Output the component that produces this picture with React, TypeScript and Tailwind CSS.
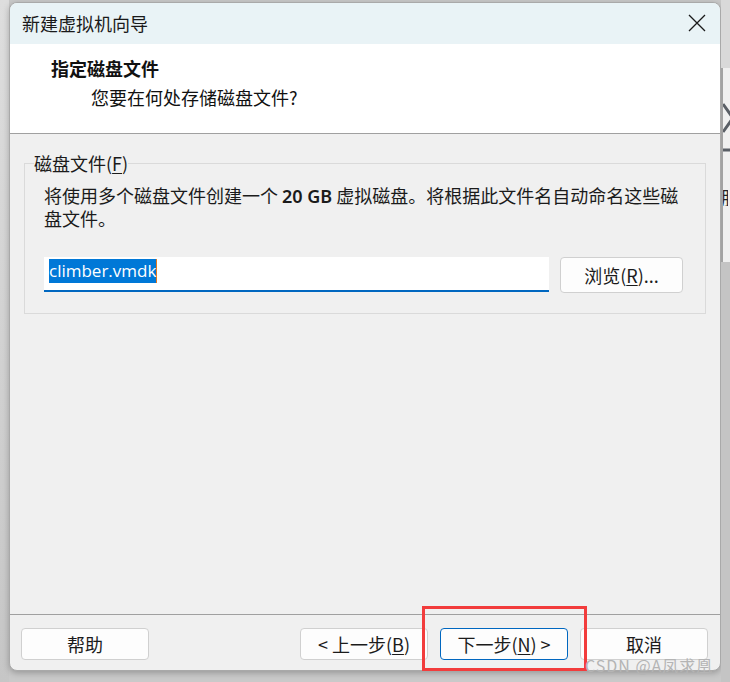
import React from "react"

const cjk = "font-['Noto_Sans_CJK_SC','Noto_Sans',sans-serif]"

function Btn({ children, primary }: { children: React.ReactNode; primary?: boolean }) {
  return (
    <div
      className={`flex h-[32px] w-[128px] items-center justify-center rounded-[4px] bg-[#fdfdfd] text-[18px] leading-none text-[#1b1b1b] border ${
        primary ? "border-[#0067c0]" : "border-[#d0d0d0]"
      }`}
    >
      {children}
    </div>
  )
}

export default function App() {
  return (
    <div className={`relative flex h-[682px] w-[730px] overflow-hidden bg-[#c9c9c9] ${cjk}`}>
      {/* left desktop strip */}
      <div className="w-[9px] shrink-0 bg-gradient-to-b from-[#dedede] to-[#c6c6c6]" />

      {/* wizard window */}
      <div className="mt-[2px] flex h-[669px] w-[712px] shrink-0 flex-col overflow-hidden rounded-[8px] border border-[#a9a9a9] bg-[#f0f0f0] shadow-[0_2px_6px_rgba(0,0,0,0.25)]">
        {/* title bar */}
        <div className="flex h-[41px] shrink-0 items-center justify-between bg-[#e9f3f6] pb-[2px] pl-[12px] pr-[14px]">
          <span className="text-[18px] leading-none text-[#1a1a1a]">新建虚拟机向导</span>
          <svg width="18" height="18" viewBox="0 0 18 18">
            <path d="M1 1 L17 17 M17 1 L1 17" stroke="#1a1a1a" strokeWidth="1.3" fill="none" />
          </svg>
        </div>

        {/* header */}
        <div className="flex h-[90px] shrink-0 flex-col border-b border-[#a0a0a0] bg-white pl-[41px] pt-[13px]">
          <div className="text-[18px] font-bold leading-[22px] text-[#111]">指定磁盘文件</div>
          <div className="ml-[40px] mt-[7px] text-[18px] leading-[22px] text-[#111]">您要在何处存储磁盘文件?</div>
        </div>

        {/* body */}
        <div className="flex-1 pl-[14px] pr-[14px] pt-[18px]">
          <fieldset className="m-0 min-w-0 border border-[#dadada] pb-[20px] pl-[19px] pr-[19px] pt-[10px]">
            <legend className="-ml-[10px] text-[18px] leading-[22px] text-[#1b1b1b]">
              磁盘文件(<span className="underline underline-offset-2">F</span>)
            </legend>
            <p className="w-[640px] text-[18px] leading-[22px] text-[#1b1b1b]">
              将使用多个磁盘文件创建一个 <b className="font-['Noto_Sans',sans-serif] font-semibold">20 GB</b> 虚拟磁盘。将根据此文件名自动命名这些磁盘文件。
            </p>
            <div className="mt-[28px] flex items-start gap-[11px]">
              <div className="flex h-[35px] w-[505px] items-start border-b-2 border-[#0067c0] bg-white pl-[5px] pt-[2px]">
                <span className="border-r border-[#e2781f] bg-[#0078d7] font-['Open_Sans','Noto_Sans',sans-serif] text-[17px] leading-[24px] text-white">
                  climber.vmdk
                </span>
              </div>
              <div className="flex h-[36px] w-[123px] items-center justify-center rounded-[4px] border border-[#d0d0d0] bg-[#fdfdfd] text-[18px] leading-none text-[#1b1b1b]">
                浏览(<span className="underline underline-offset-2">R</span>)...
              </div>
            </div>
          </fieldset>
        </div>

        {/* footer */}
        <div className="flex h-[56px] shrink-0 items-start justify-between border-t border-[#a0a0a0] pl-[11px] pr-[12px] pt-[13px]">
          <Btn>帮助</Btn>
          <div className="flex gap-[12px]">
            <Btn>
              &lt;&nbsp;上一步(<span className="underline underline-offset-2">B</span>)
            </Btn>
            <Btn primary>
              下一步(<span className="underline underline-offset-2">N</span>)&nbsp;&gt;
            </Btn>
            <Btn>取消</Btn>
          </div>
        </div>
      </div>

      {/* right strip: part of another window */}
      <div className="flex w-[9px] shrink-0 flex-col">
        <div className="h-[68px] bg-[#d9d9d9]" />
        <div className="relative h-[194px] overflow-hidden border-l-2 border-[#a3a3a3] bg-[#f0f0f0]">
          <svg width="9" height="60" viewBox="0 0 9 60" className="absolute left-0 top-[34px]">
            <path d="M0 2 L10 16 L0 30" stroke="#5a5f66" strokeWidth="3" fill="none" />
            <path d="M0 48 L10 48" stroke="#5a5f66" strokeWidth="3" />
          </svg>
          <div className="absolute left-[-2px] top-[120px] w-[7px] overflow-hidden text-[18px] leading-none text-[#222]">服</div>
        </div>
        <div className="flex-1 bg-[#c4c4c4]" />
      </div>

      {/* annotation box */}
      <div className="absolute left-[422px] top-[606px] h-[65px] w-[165px] border-[3px] border-[#f23c3c]" />

      {/* watermark */}
      <div className="absolute left-[585px] top-[655px] text-[16px] leading-[20px] tracking-[1px] text-[#b4b4b4]">
        CSDN @A凤求凰
      </div>
    </div>
  )
}
